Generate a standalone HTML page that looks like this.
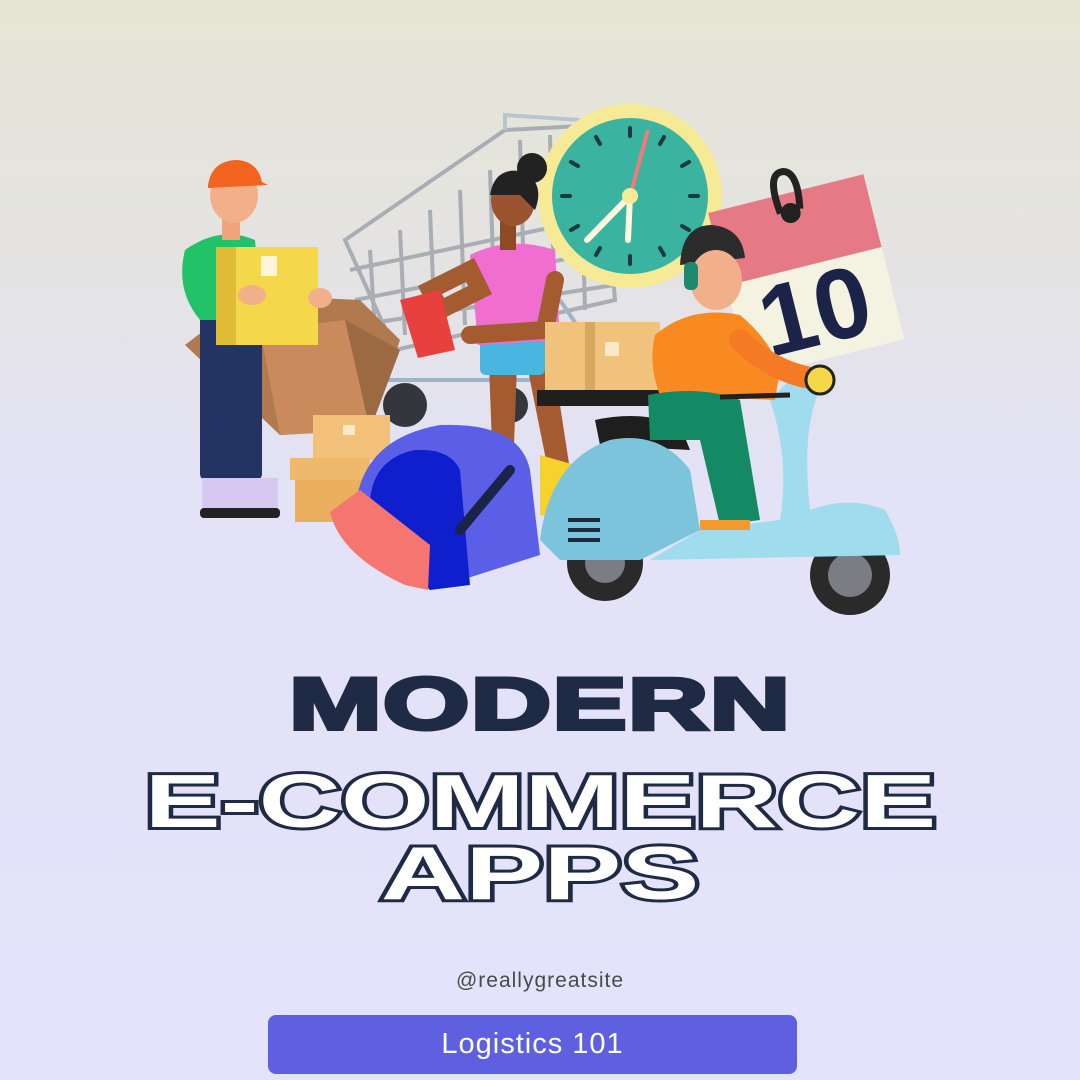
<!DOCTYPE html>
<html><head><meta charset="utf-8"><style>
html,body{margin:0;padding:0}
body{width:1080px;height:1080px;position:relative;overflow:hidden;font-family:"Liberation Sans",sans-serif;
background:linear-gradient(180deg,#e6e5d4 0%,#e4e3e3 25%,#e3e2f6 45%,#e3e3fc 100%)}
.t{position:absolute;left:0;width:1080px;text-align:center;white-space:nowrap;font-weight:bold;line-height:1}
.t span{display:inline-block}
.m{top:668px;font-size:73px;color:#1f2a44;-webkit-text-stroke:4px #1f2a44}
.m span{transform:scaleX(1.52);letter-spacing:1px}
.o{font-size:75px;color:#fff;-webkit-text-stroke:6px #1f2a44;paint-order:stroke fill}
.o1{top:764px}.o2{top:836px}
.o1 span{transform:scaleX(1.52)}
.o2 span{transform:scaleX(1.56)}
.h{position:absolute;top:969px;left:0;width:1080px;text-align:center;font-size:21px;color:#4a4a4a;letter-spacing:1px}
.b{position:absolute;left:268px;top:1015px;width:529px;height:59px;background:#5e60e0;border-radius:8px;color:#fff;font-size:29px;text-align:center;line-height:59px;letter-spacing:1px}
</style></head><body>
<svg width="1080" height="1080" style="position:absolute;left:0;top:0">
<g stroke="#a9adb4" stroke-width="4" fill="none">
<path d="M345 240 L505 130 L600 125 L615 300 L395 350 Z"/>
<path d="M370 250 L375 330 M400 230 L405 335 M430 210 L435 330 M460 190 L465 325 M490 170 L495 320 M520 140 L525 318 M550 135 L555 315 M580 130 L585 310"/>
<path d="M350 270 L610 215 M355 300 L612 250 M360 325 L614 285"/>
<path d="M505 130 L505 115 L580 120" stroke="#b8c4d0"/>
<path d="M395 350 L380 380 L600 380 M560 300 L600 360" stroke="#9fb4c8"/>
</g>
<circle cx="405" cy="405" r="22" fill="#33373d"/><circle cx="510" cy="405" r="18" fill="#33373d"/>
<path d="M185 345 L250 295 L360 300 L400 340 L370 430 L280 435 Z" fill="#b07a4e"/>
<path d="M260 330 L345 320 L370 430 L280 435 Z" fill="#c98a5c"/>
<path d="M345 320 L400 350 L370 430 Z" fill="#9b6a42"/>
<rect x="200" y="315" width="62" height="165" rx="6" fill="#233363"/>
<path d="M202 478 h40 v35 h-40 z M238 478 h40 v32 h-40z" fill="#d6c8ef"/>
<rect x="200" y="508" width="80" height="10" rx="4" fill="#222"/>
<path d="M185 250 Q220 225 255 240 L262 320 L200 320 Q175 290 185 250Z" fill="#22c269"/>
<rect x="222" y="205" width="18" height="35" fill="#f0a27a"/>
<ellipse cx="234" cy="195" rx="24" ry="28" fill="#f2b08a"/>
<path d="M208 185 Q212 160 238 160 Q258 162 262 182 L268 185 L208 188Z" fill="#f2641f"/>
<rect x="216" y="247" width="102" height="98" fill="#f5d84a"/>
<rect x="216" y="247" width="20" height="98" fill="#e0bd35"/>
<rect x="261" y="256" width="16" height="20" fill="#fff6dc"/>
<ellipse cx="252" cy="295" rx="14" ry="10" fill="#f2b08a"/><ellipse cx="320" cy="298" rx="12" ry="10" fill="#f2b08a"/>
<rect x="313" y="415" width="77" height="45" fill="#f3c07a"/>
<rect x="290" y="458" width="80" height="22" fill="#f0b86a"/>
<rect x="295" y="480" width="75" height="42" fill="#eab060"/>
<rect x="343" y="425" width="12" height="10" fill="#fbe8c8"/>
<circle cx="630" cy="196" r="92" fill="#f7ea97"/>
<circle cx="630" cy="196" r="78" fill="#3bb3a1"/>
<g stroke="#1e3a3a" stroke-width="4" stroke-linecap="round">
<path d="M630 128v8M630 256v8M562 196h8M690 196h8M664 137l-4 7M596 255l4-7M689 230l-7-4M571 162l7 4M689 162l-7 4M571 230l7-4M596 137l4 7M664 255l-4-7"/>
</g>
<path d="M630 196 L648 130" stroke="#f07b7b" stroke-width="4"/>
<path d="M630 196 L587 240 M630 196 L628 240" stroke="#fff8dc" stroke-width="6" stroke-linecap="round"/>
<circle cx="630" cy="196" r="8" fill="#f7ea97"/>
<g transform="rotate(-14 810 270)">
<rect x="725" y="190" width="160" height="170" fill="#f4f2e0"/>
<rect x="725" y="190" width="160" height="75" fill="#e57a86"/>
<circle cx="805" cy="210" r="10" fill="#222"/>
<path d="M795 208 Q790 165 808 168 Q822 172 815 208" stroke="#222" stroke-width="7" fill="none"/>
<text x="805" y="345" text-anchor="middle" font-family="Liberation Sans" font-weight="bold" font-size="100" fill="#1b2448">10</text>
</g>
<path d="M488 340 h30 l-5 130 h-20z M522 340 h28 l20 130 h-22z" fill="#a55b30"/>
<rect x="480" y="335" width="65" height="40" rx="6" fill="#4ab5e0"/>
<path d="M470 255 Q510 235 555 250 L560 340 L478 345 Z" fill="#f06ed0"/>
<path d="M470 270 L430 290 L440 310 L480 290Z M555 280 L545 330 L470 335" stroke="#a55b30" stroke-width="18" fill="none" stroke-linecap="round"/>
<rect x="500" y="220" width="16" height="30" fill="#8c4a25"/>
<ellipse cx="513" cy="200" rx="22" ry="26" fill="#9b5330"/>
<path d="M490 195 Q495 165 525 172 Q545 185 535 210 L520 195Z" fill="#222"/>
<circle cx="532" cy="168" r="15" fill="#222"/>
<path d="M400 300 L440 290 L455 350 L418 358Z" fill="#e8403e"/>
<path d="M540 455 l35 10 l-5 55 l-30 -5z" fill="#f5d22c"/>
<rect x="545" y="322" width="115" height="75" fill="#f0c27c"/>
<rect x="585" y="322" width="10" height="75" fill="#d9a860"/>
<rect x="605" y="342" width="14" height="14" fill="#fbe8c8"/>
<rect x="537" y="390" width="140" height="16" fill="#1f1f1f"/>
<path d="M680 265 Q682 225 712 225 Q742 228 745 258Z" fill="#2c2c2c"/>
<ellipse cx="716" cy="280" rx="26" ry="30" fill="#f2b08a"/>
<rect x="684" y="262" width="14" height="28" rx="6" fill="#1b8a6e"/>
<circle cx="605" cy="563" r="38" fill="#2a2a2a"/><circle cx="605" cy="563" r="20" fill="#7a7e84"/>
<circle cx="850" cy="575" r="40" fill="#2a2a2a"/><circle cx="850" cy="575" r="22" fill="#7a7e84"/>
<path d="M595 420 Q640 410 680 425 L690 450 L600 445Z" fill="#1e1e1e"/>
<path d="M540 540 Q550 460 610 440 Q660 430 690 470 L700 530 L640 560 L560 560Z" fill="#7cc3dc"/>
<path d="M700 530 L780 520 Q790 460 770 400 L800 370 L825 380 Q800 420 810 510 Q850 495 885 510 Q900 535 900 555 L650 560Z" fill="#9fdcee"/>
<path d="M568 520 h32 M568 530 h32 M568 540 h32" stroke="#1e2b3b" stroke-width="4"/>
<path d="M655 335 Q690 305 740 315 Q770 340 780 370 L775 400 L660 395 Q648 365 655 335Z" fill="#f98a22"/>
<path d="M740 340 Q770 370 810 378" stroke="#f47a25" stroke-width="22" fill="none" stroke-linecap="round"/>
<path d="M648 395 Q700 385 740 400 L760 520 L720 525 L700 440 L650 440Z" fill="#138a64"/>
<path d="M700 520 h50 v10 h-50z" fill="#f29a30"/>
<circle cx="820" cy="380" r="14" fill="#f5d84a" stroke="#222" stroke-width="3"/>
<path d="M720 397 L790 395" stroke="#222" stroke-width="5"/>
<path d="M355 520 Q355 440 440 425 Q520 422 530 470 L540 555 L430 590 Z" fill="#5b5fe8"/>
<path d="M370 520 Q365 460 415 450 Q450 448 460 470 L470 585 L430 590Z" fill="#0f1fce"/>
<path d="M330 512 L360 490 L430 545 L428 590 L405 585 Q340 555 330 512Z" fill="#f57570"/>
<path d="M460 530 L510 470" stroke="#1b2448" stroke-width="10" stroke-linecap="round"/>
</svg>
<div class="t m"><span>MODERN</span></div>
<div class="t o o1"><span>E-COMMERCE</span></div>
<div class="t o o2"><span>APPS</span></div>
<div class="h">@reallygreatsite</div>
<div class="b">Logistics 101</div>
</body></html>
